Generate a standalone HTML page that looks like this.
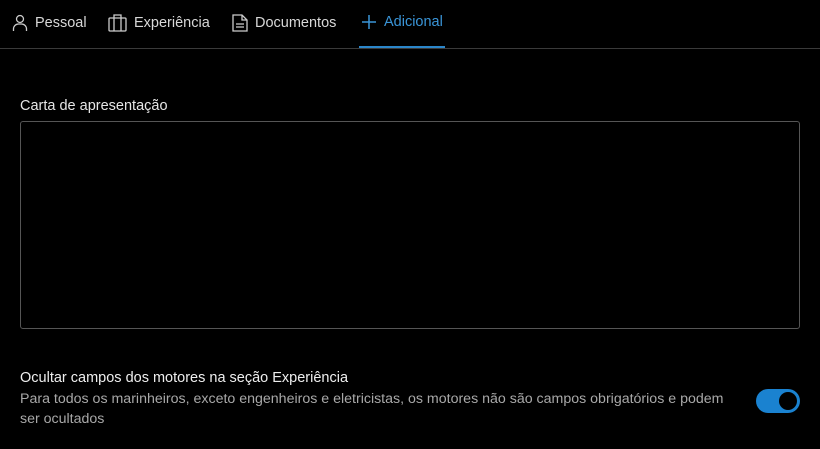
<!DOCTYPE html>
<html><head><meta charset="utf-8"><style>
body{margin:0;width:820px;height:449px;background:#000;font-family:"Liberation Sans",sans-serif;color:#e6e6e6;position:relative;overflow:hidden}
.tab{position:absolute;top:14px;font-size:14.5px;color:#d8d8d8;display:flex;align-items:center}
.tab svg{margin-right:7px}
.line{position:absolute;left:0;right:0;top:48px;height:1px;background:#3a3a3a}
.ul{position:absolute;left:359px;width:86px;top:46px;height:2px;background:#2b86c9}
.lbl{position:absolute;left:20px;top:98px;font-size:14.5px;color:#e6e6e6}
.ta{position:absolute;left:20px;top:121px;width:778px;height:206px;border:1px solid #555;border-radius:3px}
.t1{position:absolute;left:20px;top:370px;font-size:14.5px;color:#eee}
.t2{position:absolute;left:20px;top:389px;width:720px;font-size:14.2px;line-height:20px;color:#a8a8a8}
.tg{position:absolute;left:756px;top:389px;width:44px;height:24px;border-radius:12px;background:#1a82d0}
.tg:after{content:"";position:absolute;right:3px;top:3px;width:18px;height:18px;border-radius:50%;background:#000}
</style></head><body>
<div class="tab" style="left:12px"><svg width="16" height="18" viewBox="0 0 16 18" fill="none" stroke="#ccc" stroke-width="1.3"><circle cx="8" cy="5" r="3.5"/><path d="M1.5 17v-2a5 5 0 0 1 5-5h3a5 5 0 0 1 5 5v2"/></svg>Pessoal</div>
<div class="tab" style="left:108px"><svg width="19" height="18" viewBox="0 0 19 18" fill="none" stroke="#ccc" stroke-width="1.3"><rect x="1" y="4" width="17" height="13" rx="1"/><path d="M6 4V1h7v3M6 4v13M13 4v13"/></svg>Experiência</div>
<div class="tab" style="left:232px"><svg width="16" height="18" viewBox="0 0 16 18" fill="none" stroke="#ccc" stroke-width="1.3"><path d="M1 1h9l5 5v11H1z"/><path d="M10 1v5h5M4 10h8M4 13h8"/></svg>Documentos</div>
<div class="tab" style="left:361px;color:#3a95d8"><svg width="16" height="16" viewBox="0 0 16 16" stroke="#3a95d8" stroke-width="1.5"><path d="M8 1v14M1 8h14"/></svg>Adicional</div>
<div class="line"></div><div class="ul"></div>
<div class="lbl">Carta de apresentação</div>
<div class="ta"></div>
<div class="t1">Ocultar campos dos motores na seção Experiência</div>
<div class="t2">Para todos os marinheiros, exceto engenheiros e eletricistas, os motores não são campos obrigatórios e podem<br>ser ocultados</div>
<div class="tg"></div>
</body></html>
